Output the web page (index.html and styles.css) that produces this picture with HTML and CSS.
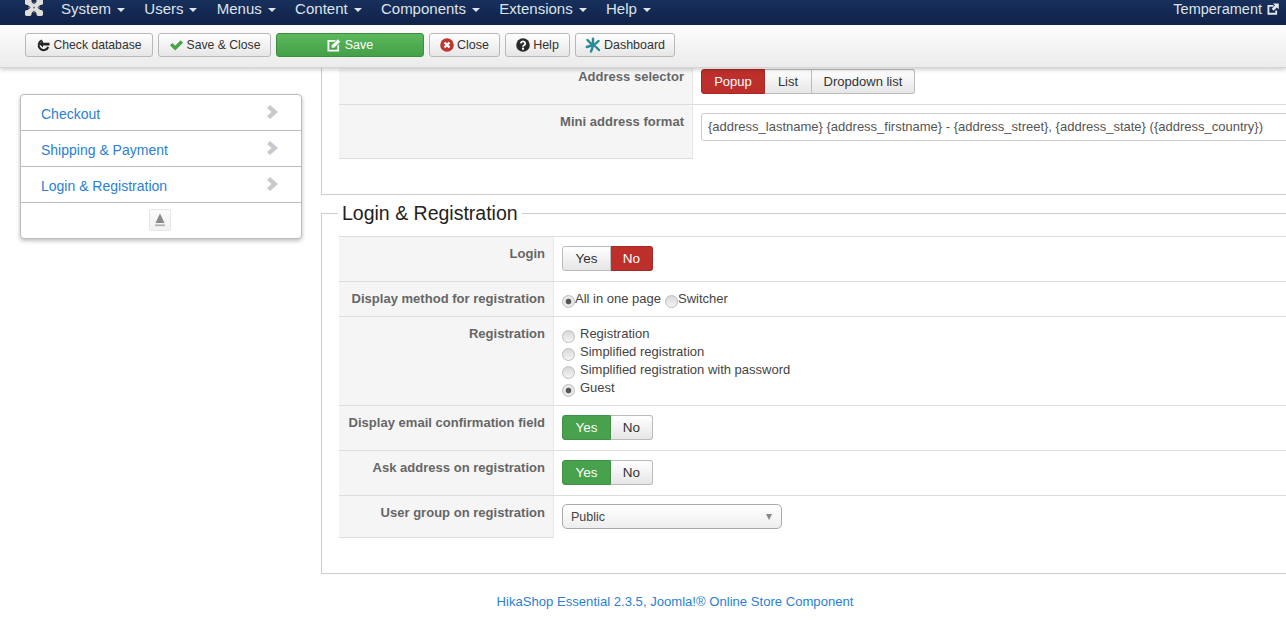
FILE: index.html
```html
<!DOCTYPE html>
<html lang="en">
<head>
<meta charset="utf-8">
<title>HikaShop configuration</title>
<link rel="stylesheet" href="styles.css">
</head>
<body>
<header class="topbar">
  <svg class="joomla" viewBox="0 0 18 17" width="18" height="17"><g fill="none" stroke="#e2dfd8" stroke-width="4.600"><path d="M3.500 3.500 L14.500 13.500"/><path d="M14.500 3.500 L3.500 13.500"/></g><g fill="#e2dfd8"><rect x="0" y="0" width="6.500" height="6" rx="1.800"/><rect x="11.500" y="0" width="6.500" height="6" rx="1.800"/><rect x="0" y="11" width="6.500" height="6" rx="1.800"/><rect x="11.500" y="11" width="6.500" height="6" rx="1.800"/></g><g fill="#6a7690"><circle cx="9" cy="4" r="1"/><circle cx="9" cy="13" r="1"/><circle cx="4" cy="8.500" r="1"/><circle cx="14" cy="8.500" r="1"/><circle cx="9" cy="8.500" r="1"/></g></svg>
  <nav class="menu">
    <a class="menu-item">System<i class="caret"></i></a>
    <a class="menu-item">Users<i class="caret"></i></a>
    <a class="menu-item">Menus<i class="caret"></i></a>
    <a class="menu-item">Content<i class="caret"></i></a>
    <a class="menu-item">Components<i class="caret"></i></a>
    <a class="menu-item">Extensions<i class="caret"></i></a>
    <a class="menu-item">Help<i class="caret"></i></a>
  </nav>
  <a class="site-link">Temperament
    <svg viewBox="0 0 12 12" width="12" height="12"><path d="M0.500 2h6v1.800H2.300v6h6V7.500h1.800v4.300H0.500z" fill="#e4e7ee"/><path d="M6 0.500H11.800v5.800L9.900 4.400 6.600 7.700 4.700 5.800 8 2.500z" fill="#e4e7ee"/></svg>
  </a>
</header>

<div class="toolbar">
  <button class="btn btn-check">
    <svg viewBox="0 0 14 14" width="14" height="14"><path d="M6 2.400A5 5 0 1 0 12.300 9" fill="none" stroke="#222" stroke-width="2"/><path d="M3.200 6L7 2.600V4.700H13.500V7.500H7V9.500z" fill="#222"/></svg>
    Check database</button>
  <button class="btn btn-saveclose">
    <svg viewBox="0 0 14 14" width="15" height="14"><path d="M0.500 7.300l2.400-2.400 2.800 2.800L11.100 2.300l2.400 2.400-7.800 7.800z" fill="#46a546"/></svg>
    Save &amp; Close</button>
  <button class="btn btn-save">
    <svg viewBox="0 0 14 14" width="14" height="14"><path d="M0.500 2h8.500L7.200 3.800H2.300v8h8V8l1.800-1.800V13.600H0.500z" fill="#fff"/><path d="M4.700 7.400L10.800 1.300l2.400 2.400L7.100 9.800H4.700z" fill="#fff"/></svg>
    Save</button>
  <button class="btn btn-close">
    <svg viewBox="0 0 14 14" width="14" height="14"><circle cx="7" cy="7" r="6.800" fill="#bd362f"/><path d="M4.500 4.500l5 5M9.500 4.500l-5 5" stroke="#fff" stroke-width="2.400"/></svg>
    Close</button>
  <button class="btn btn-help">
    <svg viewBox="0 0 14 14" width="14" height="14"><circle cx="7" cy="7" r="6.800" fill="#2a2a2a"/><path d="M4.800 5.400a2.200 2 0 1 1 3.300 1.800c-.8.400-1.100.8-1.100 1.500" fill="none" stroke="#fff" stroke-width="1.800"/><rect x="6" y="9.700" width="2" height="2" fill="#fff"/></svg>
    Help</button>
  <button class="btn btn-dash">
    <svg viewBox="0 0 16 16" width="16" height="16"><g fill="none" stroke="#2b8a96" stroke-width="2.400" stroke-linecap="round"><path d="M8 8V1.800"/><path d="M8 8Q11 7 13.500 4"/><path d="M8 8Q11 9.500 14 13"/><path d="M8 8Q7.500 11 6 14.500"/><path d="M8 8Q5 9 1.800 10"/><path d="M8 8Q5 6 2.500 3"/></g></svg>
    Dashboard</button>
</div>

<main class="layout">
  <aside class="sidebar">
    <ul class="side-list">
      <li class="side-row"><a>Checkout</a><svg class="chev" viewBox="0 0 11 14" width="11" height="14"><path d="M3 0L11 7 3 14 0 11 4.500 7 0 3z" fill="#c9c9cd"/></svg></li>
      <li class="side-row"><a>Shipping &amp; Payment</a><svg class="chev" viewBox="0 0 11 14" width="11" height="14"><path d="M3 0L11 7 3 14 0 11 4.500 7 0 3z" fill="#c9c9cd"/></svg></li>
      <li class="side-row"><a>Login &amp; Registration</a><svg class="chev" viewBox="0 0 11 14" width="11" height="14"><path d="M3 0L11 7 3 14 0 11 4.500 7 0 3z" fill="#c9c9cd"/></svg></li>
      <li class="side-foot"><span class="eject"><svg viewBox="0 0 14 16" width="14" height="16"><path d="M7 1.500l4.500 9.500h-9z" fill="#8a8a8a"/><rect x="2" y="12.500" width="10" height="1.600" fill="#aaa"/></svg></span></li>
    </ul>
  </aside>

  <div class="content">
    <section class="panel panel-top">
      <div class="table table-top">
        <div class="row row-selector">
          <div class="key">Address selector</div>
          <div class="val val-selector">
            <div class="seg"><span class="seg-btn seg-popup red">Popup</span><span class="seg-btn seg-list">List</span><span class="seg-btn seg-drop">Dropdown list</span></div>
          </div>
        </div>
        <div class="row row-mini">
          <div class="key">Mini address format</div>
          <div class="val val-mini"><input class="text-input" type="text" value="{address_lastname} {address_firstname} - {address_street}, {address_state} ({address_country})"></div>
        </div>
      </div>
    </section>

    <fieldset class="panel panel-login">
      <legend class="legend">Login &amp; Registration</legend>
      <div class="table table-login">
        <div class="row row-45">
          <div class="key">Login</div>
          <div class="val"><div class="seg"><span class="seg-btn wide">Yes</span><span class="seg-btn wide red">No</span></div></div>
        </div>
        <div class="row row-35">
          <div class="key">Display method for registration</div>
          <div class="val inline-radios">
            <label class="radio-inline"><input class="radio" type="radio" name="m" checked>All in one page</label>
            <label class="radio-inline"><input class="radio" type="radio" name="m">Switcher</label>
          </div>
        </div>
        <div class="row row-89">
          <div class="key">Registration</div>
          <div class="val radio-stack">
            <label class="radio-line"><input class="radio" type="radio" name="r">Registration</label>
            <label class="radio-line"><input class="radio" type="radio" name="r">Simplified registration</label>
            <label class="radio-line"><input class="radio" type="radio" name="r">Simplified registration with password</label>
            <label class="radio-line"><input class="radio" type="radio" name="r" checked>Guest</label>
          </div>
        </div>
        <div class="row row-45">
          <div class="key">Display email confirmation field</div>
          <div class="val"><div class="seg"><span class="seg-btn wide green">Yes</span><span class="seg-btn wide">No</span></div></div>
        </div>
        <div class="row row-45">
          <div class="key">Ask address on registration</div>
          <div class="val"><div class="seg"><span class="seg-btn wide green">Yes</span><span class="seg-btn wide">No</span></div></div>
        </div>
        <div class="row row-42">
          <div class="key">User group on registration</div>
          <div class="val val-select"><div class="select"><span>Public</span><i class="select-arrow"></i></div></div>
        </div>
      </div>
    </fieldset>
  </div>
</main>

<footer class="footer"><a>HikaShop Essential 2.3.5, Joomla!® Online Store Component</a></footer>
</body>
</html>
```

FILE: styles.css
```css
* { box-sizing: border-box; }
html, body { margin: 0; padding: 0; }
body {
  height: 620px;
  overflow: hidden;
  background: #fff;
  font-family: "Liberation Sans", Arial, sans-serif;
  font-size: 13px;
  color: #555;
}
svg { flex: none; display: block; }

/* top bar */
.topbar {
  height: 25px;
  background: linear-gradient(#17305c, #102249);
  display: flex;
  align-items: flex-start;
  padding-left: 25px;
  color: #dfe3ea;
  font-size: 15px;
  position: relative;
  z-index: 3;
}
.joomla { margin-top: -1px; }
.menu { display: flex; margin-left: 18px; gap: 19.3px; line-height: 18px; }
.menu-item { display: flex; align-items: center; }
.caret {
  width: 0; height: 0; margin: 1px 0 0 6px;
  border-left: 4px solid transparent;
  border-right: 4px solid transparent;
  border-top: 4px solid #dfe3ea;
}
.site-link {
  margin-left: auto;
  padding-right: 7px;
  display: flex;
  align-items: center;
  gap: 5px;
  line-height: 18px;
  font-size: 14.5px;
}

/* toolbar */
.toolbar {
  height: 43px;
  background: linear-gradient(#fdfdfd, #ebebeb);
  border-bottom: 1px solid #d4d4d4;
  box-shadow: 0 2px 4px rgba(0,0,0,.18);
  display: flex;
  align-items: flex-start;
  padding: 8px 0 0 25px;
  gap: 5px;
  position: relative;
  z-index: 2;
}
.btn {
  height: 24px;
  padding: 0;
  border: 1px solid #b9b9b9;
  border-radius: 3px;
  background: linear-gradient(#fff, #e6e6e6);
  color: #333;
  font: 12.5px "Liberation Sans", Arial, sans-serif;
  display: flex;
  align-items: center;
  justify-content: center;
  gap: 3px;
}
.btn-check { width: 128px; font-size: 12.2px; }
.btn-saveclose { width: 113px; font-size: 12.2px; }
.btn-save {
  width: 148px;
  background: linear-gradient(#5cb85c, #43a047);
  border-color: #3c8f3f;
  color: #fff;
  gap: 4px;
}
.btn-close { width: 71px; }
.btn-help { width: 65px; }
.btn-dash { width: 100px; }

/* layout */
.layout { display: flex; align-items: flex-start; height: 505px; }
.sidebar { width: 321px; flex: none; padding: 26px 0 0 20px; }
.side-list {
  list-style: none;
  margin: 0;
  padding: 0;
  width: 282px;
  border: 1px solid #bbb;
  border-radius: 4px;
  box-shadow: 0 2px 4px rgba(0,0,0,.25);
  background: #fff;
}
.side-row {
  height: 36px;
  border-bottom: 1px solid #bbb;
  display: flex;
  align-items: center;
  justify-content: space-between;
  padding: 2px 23px 0 20px;
  color: #2a7fd4;
  font-size: 14px;
}
.chev { margin-top: -3px; }
.side-foot { height: 35px; display: flex; justify-content: center; padding: 6px 2px 0 0; }
.eject {
  width: 22px; height: 22px;
  border: 1px solid #e6e6e6;
  border-radius: 2px;
  display: flex; align-items: center; justify-content: center;
  background: linear-gradient(#fcfcfc, #f2f2f2);
}

/* content */
.content { flex: 1; min-width: 0; overflow: hidden; display: flex; flex-direction: column; }
.panel {
  border: 1px solid #ccc;
  border-right: 0;
  margin: 0;
  padding: 0 0 0 17px;
}
.panel-top { height: 127px; border-top: 0; flex: none; }
.panel-login {
  min-width: 0;
  margin-top: 9px;
  height: 370px;
  flex: none;
}
.legend {
  padding: 0 4px;
  margin-left: -1px;
  font-size: 19.5px;
  line-height: 19px;
  color: #222;
}
.table { width: 100%; }
.table-top { --key: 354px; }
.table-login { --key: 215px; border-top: 1px solid #ddd; margin-top: 13px; }
.row { display: flex; border-bottom: 1px solid #ddd; }
.key {
  width: var(--key);
  flex: none;
  background: #f5f5f5;
  border-right: 1px solid #e8e8e8;
  padding: 9px 8px 0 0;
  text-align: right;
  font-weight: bold;
  line-height: 16px;
  color: #666;
  letter-spacing: .02px;
}
.val { padding: 9px 8px; color: #444; }
.row-selector { height: 37px; }
.row-selector .key { padding-top: 1px; }
.val-selector { padding-top: 1px; }
.row-mini { height: 54px; border-bottom: 0; }
.row-mini .key { border-bottom: 1px solid #ddd; }
.val-mini { flex: 1; min-width: 0; padding: 8px 0 0 8px; }
.row-45 { height: 45px; }
.row-35 { height: 35px; }
.row-89 { height: 89px; }
.row-42 { height: 42px; border-bottom: 0; }
.row-42 .key { border-bottom: 1px solid #ddd; }
.val-select { padding-top: 8px; }

.seg { display: inline-flex; height: 25px; }
.seg-btn {
  padding: 0;
  border: 1px solid #bbb;
  border-left-width: 0;
  background: linear-gradient(#fff, #e6e6e6);
  color: #333;
  line-height: 23px;
  font-size: 13px;
  text-align: center;
}
.seg-btn:first-child { border-left-width: 1px; border-radius: 3px 0 0 3px; }
.seg-btn:last-child { border-radius: 0 3px 3px 0; }
.seg-popup { width: 64px; }
.seg-list { width: 47px; }
.seg-drop { width: 103px; }
.seg-btn.wide { width: 49px; font-size: 13.5px; }
.seg-btn.wide:last-child { width: 42px; }
.seg-btn.red { background: #bd2f2b; border-color: #a82825; color: #fff; }
.seg-btn.green { background: #48a14d; border-color: #3f9145; color: #fff; }

.text-input {
  width: calc(100% + 8px);
  height: 28px;
  border: 1px solid #ccc;
  border-radius: 3px;
  padding: 0 6px 2px;
  font: 13px "Liberation Sans", Arial, sans-serif;
  color: #555;
  background: #fff;
  outline: none;
}

.radio {
  appearance: none;
  width: 13px;
  height: 13px;
  margin: 0;
  border: 1px solid #bdbdbd;
  border-radius: 50%;
  background: linear-gradient(#d8d8d8, #f4f4f4);
  flex: none;
  position: relative;
  top: 3px;
}
.radio:checked { background: radial-gradient(circle, #555 0 2.500px, #e8e8e8 3.200px); }
.inline-radios { display: flex; padding-top: 9px; line-height: 16px; }
.radio-inline { display: flex; align-items: flex-start; margin-right: 4px; }
.radio-inline .radio { margin-top: 1px; }
.radio-stack { padding-top: 8px; display: flex; flex-direction: column; }
.radio-line { display: flex; align-items: flex-start; gap: 5px; height: 18px; line-height: 18px; }
.radio-line .radio { margin-top: 2px; }

.select {
  width: 220px;
  height: 25px;
  border: 1px solid #aaa;
  border-radius: 5px;
  background: linear-gradient(#fff, #eee);
  display: flex;
  align-items: center;
  justify-content: space-between;
  padding: 0 9px 0 8px;
  color: #444;
  font-size: 12.5px;
}
.select-arrow {
  width: 0; height: 0;
  border-left: 3.500px solid transparent;
  border-right: 3.500px solid transparent;
  border-top: 6px solid #888;
}

.footer {
  padding: 21px 0 0 64px;
  text-align: center;
  color: #2a7fd4;
  font-size: 13.1px;
  line-height: 16px;
}
```
